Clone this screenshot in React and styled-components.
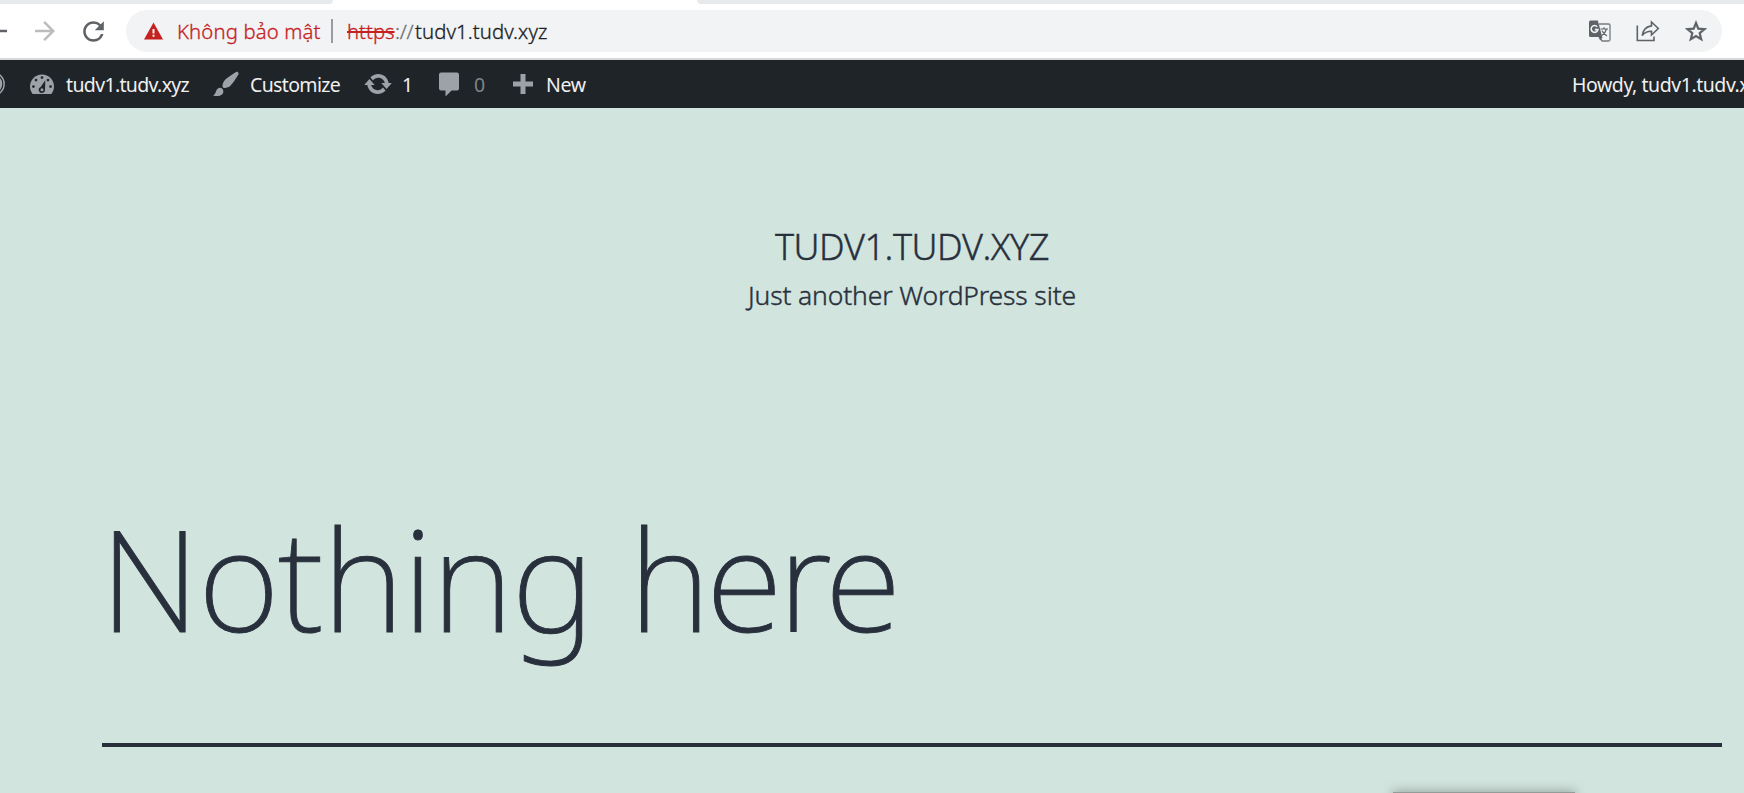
import React from 'react';
import styled, { createGlobalStyle } from 'styled-components';
import { MdArrowForward, MdArrowBack, MdRefresh } from 'react-icons/md';

const GlobalStyle = createGlobalStyle`
  *, *::before, *::after { box-sizing: border-box; }
  html, body { margin: 0; height: 100%; overflow: hidden; }
  body { background: #d1e4dd; font-family: "Noto Sans", "Open Sans", sans-serif; }
`;

const Page = styled.div`
  display: flex;
  flex-direction: column;
  width: 100vw;
  height: 793px;
  overflow: hidden;
`;

const TabStrip = styled.div`
  display: flex;
  flex: none;
  height: 4px;
  background: #fff;
`;
const TabEdge = styled.div`
  width: ${(p) => p.$width || 'auto'};
  flex: ${(p) => (p.$width ? 'none' : 1)};
  margin-left: ${(p) => p.$offset || 0};
  background: #e7eaed;
  border-radius: ${(p) => p.$radius};
`;

const Toolbar = styled.div`
  display: flex;
  flex: none;
  align-items: center;
  height: 56px;
  padding: 0 22px 0 0;
  background: #fff;
  border-bottom: 2px solid #d6d8da;
`;
const NavButton = styled.span`
  display: flex;
  flex: none;
  width: 48px;
  color: ${(p) => (p.$dim ? '#babcbe' : '#5f6368')};
  margin-left: ${(p) => p.$offset || 0};
`;
const Omnibox = styled.div`
  display: flex;
  flex: 1;
  align-items: center;
  height: 42px;
  padding: 0 15px 0 18px;
  border-radius: 21px;
  background: #f1f3f4;
  font-size: 20.3px;
  font-weight: 300;
  line-height: 42px;
  white-space: nowrap;
  -webkit-text-stroke: 0.3px currentColor;
`;
const SecurityLabel = styled.span`
  width: 154px;
  margin-left: 14px;
  color: #c5221f;
  letter-spacing: 0.15px;
`;
const Separator = styled.span`
  width: 2px;
  height: 24px;
  margin-right: 14px;
  background: #9a9da0;
`;
const Scheme = styled.span`
  width: 48px;
  color: #c5221f;
  text-decoration: line-through;
  text-decoration-thickness: 1.5px;
`;
const Slashes = styled.span`
  width: 20px;
  color: #6b6f73;
  letter-spacing: -0.3px;
`;
const Host = styled.span`
  flex: 1;
  color: #202124;
  letter-spacing: 0.1px;
`;
const OmniActions = styled.span`
  display: flex;
  align-items: center;
  gap: 25px;
  color: #5f6368;
`;

const AdminBar = styled.div`
  display: flex;
  flex: none;
  align-items: center;
  height: 48px;
  background: #1f2428;
  color: #f0f0f1;
  font-size: 19.5px;
  line-height: 48px;
  white-space: nowrap;
  overflow: hidden;
`;
const AdminItem = styled.div`
  display: flex;
  flex: none;
  align-items: center;
  width: ${(p) => p.$width};
  svg { flex: none; fill: #9ca2a7; }
`;
const AdminLabel = styled.span`
  padding-top: 1px;
  margin-left: ${(p) => p.$gap};
  color: ${(p) => (p.$muted ? '#808589' : 'inherit')};
  letter-spacing: ${(p) => p.$spacing || '-0.65px'};
`;
const Greeting = styled.div`
  width: 172px;
  padding-top: 1px;
  margin-left: auto;
  letter-spacing: -0.45px;
`;

const Site = styled.div`
  position: relative;
  display: flex;
  flex: 1;
  flex-direction: column;
  padding: 115px 22px 0 102px;
  color: #28303d;
`;
const SiteHeader = styled.header`
  display: flex;
  flex-direction: column;
  align-items: center;
  height: 265px;
  font-weight: 300;
  -webkit-text-stroke: 0.4px currentColor;
`;
const SiteTitle = styled.h1`
  margin: 0;
  font-size: 36px;
  font-weight: inherit;
  font-kerning: none;
  line-height: 48px;
  letter-spacing: -0.5px;
`;
const Tagline = styled.p`
  margin: 0;
  font-size: 26.5px;
  line-height: 48px;
  letter-spacing: -0.15px;
`;
const ArchiveHeader = styled.section`
  height: 259px;
  border-bottom: 4px solid #28303d;
`;
const ArchiveTitle = styled.h2`
  margin: 0 0 0 -2px;
  font-size: 140px;
  font-weight: 200;
  line-height: 180px;
  letter-spacing: -1.4px;
  word-spacing: 1px;
  white-space: nowrap;
  -webkit-text-stroke: 0.9px currentColor;
`;
const TightWord = styled.span`
  letter-spacing: -4.2px;
`;
const Popup = styled.div`
  position: absolute;
  left: 1393px;
  bottom: -9px;
  width: 182px;
  height: 10px;
  background: #929d99;
  box-shadow: 0 0 12px rgba(0, 0, 0, 0.35);
`;
const LogoCrop = styled.span`
  display: flex;
  margin-left: -22px;
`;

const WarningIcon = () => (
  <svg width="19" height="18" viewBox="0 0 19 18">
    <path d="M9.5 0.5L19 17.5H0z" fill="#c5221f" />
    <path d="M8.5 7h2v4.4h-2zM8.5 12.8h2v2h-2z" fill="#f1f3f4" />
  </svg>
);
const TranslateIcon = () => (
  <svg width="22" height="22" viewBox="0 0 22 22">
    <path d="M10 4h9.5a1.5 1.5 0 0 1 1.5 1.5v14a1.5 1.5 0 0 1-1.5 1.5H13l-2-4" fill="none" stroke="#777b7f" strokeWidth="1.3" />
    <path d="M1.5 0.5h7.3l4.4 16.5H1.5A1.5 1.5 0 0 1 0 15.5V2A1.5 1.5 0 0 1 1.5.5z" fill="#5f6368" />
    <path d="M9.5 17h4.2l-2.5 3.5z" fill="#5f6368" />
    <path d="M8.2 6.8A3.400 3.400 0 1 0 8.900 9.600H5.800" fill="none" stroke="#f1f3f4" strokeWidth="1.6" />
    <path d="M11.5 9h7.5M15 7.3V9M17.5 9c-.8 3-2.5 5-4.7 6.5M13 10.8c1.2 2.2 3 4 5 5.2" fill="none" stroke="#5f6368" strokeWidth="1.2" />
  </svg>
);
const ShareIcon = () => (
  <svg width="24" height="22" viewBox="0 0 24 22" fill="none" stroke="#5f6368" strokeWidth="1.6">
    <path d="M1.3 5.5V20.5H18V16.5" />
    <path d="M15.5 2l6.800 6.500-6.800 6.500v-3.800c-4 0-7 1-9.300 4.300.7-5 3.600-8.800 9.300-9.600z" />
  </svg>
);
const StarIcon = () => (
  <svg width="22" height="22" viewBox="0 0 22 22" fill="none" stroke="#5f6368" strokeWidth="2.2">
    <path d="M11 3l2.300 5.700 6.100.5-4.700 4 1.500 6L11 16l-5.200 3.200 1.500-6-4.700-4 6.100-.5z" />
  </svg>
);
const WordPressIcon = () => (
  <svg width="30" height="30" viewBox="0 0 30 30">
    <circle cx="15" cy="15" r="11.2" fill="none" stroke="#9ca2a7" strokeWidth="1.4" />
    <circle cx="15" cy="15" r="9.3" />
  </svg>
);
const DashboardIcon = () => (
  <svg width="30" height="30" viewBox="0 0 20 20">
    <g transform="translate(0 -.3)">
      <path d="M3.760 17h12.480c1.100-1.370 1.760-3.110 1.760-5 0-4.420-3.580-8-8-8s-8 3.580-8 8c0 1.890.660 3.630 1.760 5z" />
      <g style={{ fill: '#1f2428' }}>
        <circle cx="10" cy="6" r=".9" /><circle cx="6" cy="7.700" r=".9" /><circle cx="14" cy="7.700" r=".9" />
        <circle cx="4.300" cy="12" r=".9" /><circle cx="15.700" cy="12" r=".9" />
        <path fillRule="evenodd" d="M12.200 7.800l-.2 6.400a2.100 2.100 0 1 1-2.900-1.900zM10 13.200a1 1 0 1 0 0 2 1 1 0 0 0 0-2z" />
      </g>
    </g>
  </svg>
);
const BrushIcon = () => (
  <svg width="30" height="30" viewBox="0 0 20 20">
    <path d="M18.330 3.570s.270-.8-.310-1.360c-.530-.520-1.220-.240-1.220-.240-.610.300-5.760 3.470-7.670 5.570-.860.960-2.060 3.790-1.090 4.820.920.980 3.960-.170 4.790-1 2.060-2.060 5.210-7.170 5.500-7.790zM1.400 17.650c2.370-1.560 1.460-3.410 3.230-4.640.930-.650 2.220-.620 3.080.290.630.670.800 2.570-.160 3.460-1.570 1.450-4 1.550-6.150.890z" />
  </svg>
);
const UpdateIcon = () => (
  <svg width="30" height="30" viewBox="0 0 20 20">
    <path d="M10.200 3.280c3.530 0 6.430 2.610 6.920 6h2.080l-3.500 4-3.500-4h2.320c-.450-1.970-2.210-3.450-4.320-3.450-1.450 0-2.730.710-3.540 1.780L4.950 5.660C6.230 4.200 8.110 3.280 10.200 3.280zm-.4 13.440c-3.520 0-6.430-2.610-6.920-6H.8l3.500-4c1.170 1.330 2.330 2.670 3.500 4H5.480c.450 1.970 2.210 3.450 4.320 3.450 1.450 0 2.730-.710 3.540-1.780l1.710 1.950c-1.280 1.460-3.150 2.380-5.250 2.380z" />
  </svg>
);
const CommentIcon = () => (
  <svg width="20" height="24" viewBox="0 0 20 24">
    <path d="M2 0h16a2 2 0 0 1 2 2v14a2 2 0 0 1-2 2h-5.500L6.500 24v-6H2a2 2 0 0 1-2-2V2a2 2 0 0 1 2-2z" transform="translate(0 .5)" />
  </svg>
);
const PlusIcon = () => (
  <svg width="20" height="20" viewBox="0 0 20 20">
    <path d="M7.500 0h5v7.500H20v5h-7.500V20h-5v-7.500H0v-5h7.500z" />
  </svg>
);

export default function App() {
  return (
    <Page>
      <GlobalStyle />
      <TabStrip>
        <TabEdge $width="333px" $radius="0 0 6px 0" />
        <TabEdge $offset="364px" $radius="0 0 0 6px" />
      </TabStrip>
      <Toolbar>
        <NavButton $offset="-18px"><MdArrowBack size={30} /></NavButton>
        <NavButton $dim><MdArrowForward size={30} /></NavButton>
        <NavButton><MdRefresh size={31} /></NavButton>
        <Omnibox>
          <WarningIcon />
          <SecurityLabel>Không bảo mật</SecurityLabel>
          <Separator />
          <Scheme>https</Scheme>
          <Slashes>://</Slashes>
          <Host>tudv1.tudv.xyz</Host>
          <OmniActions>
            <TranslateIcon />
            <ShareIcon />
            <StarIcon />
          </OmniActions>
        </Omnibox>
      </Toolbar>
      <AdminBar>
        <AdminItem $width="27px"><LogoCrop><WordPressIcon /></LogoCrop></AdminItem>
        <AdminItem $width="184px">
          <DashboardIcon /><AdminLabel $gap="9px">tudv1.tudv.xyz</AdminLabel>
        </AdminItem>
        <AdminItem $width="152px">
          <BrushIcon /><AdminLabel $gap="9px">Customize</AdminLabel>
        </AdminItem>
        <AdminItem $width="76px">
          <UpdateIcon /><AdminLabel $gap="9px">1</AdminLabel>
        </AdminItem>
        <AdminItem $width="74px">
          <CommentIcon /><AdminLabel $gap="15px" $muted>0</AdminLabel>
        </AdminItem>
        <AdminItem $width="90px">
          <PlusIcon /><AdminLabel $gap="13px" $spacing="-0.3px">New</AdminLabel>
        </AdminItem>
        <Greeting>Howdy, tudv1.tudv.xyz</Greeting>
      </AdminBar>
      <Site>
        <SiteHeader>
          <SiteTitle>TUDV1.TUDV.XYZ</SiteTitle>
          <Tagline>Just another WordPress site</Tagline>
        </SiteHeader>
        <ArchiveHeader>
          <ArchiveTitle>Nothing <TightWord>here</TightWord></ArchiveTitle>
        </ArchiveHeader>
        <Popup />
      </Site>
    </Page>
  );
}
